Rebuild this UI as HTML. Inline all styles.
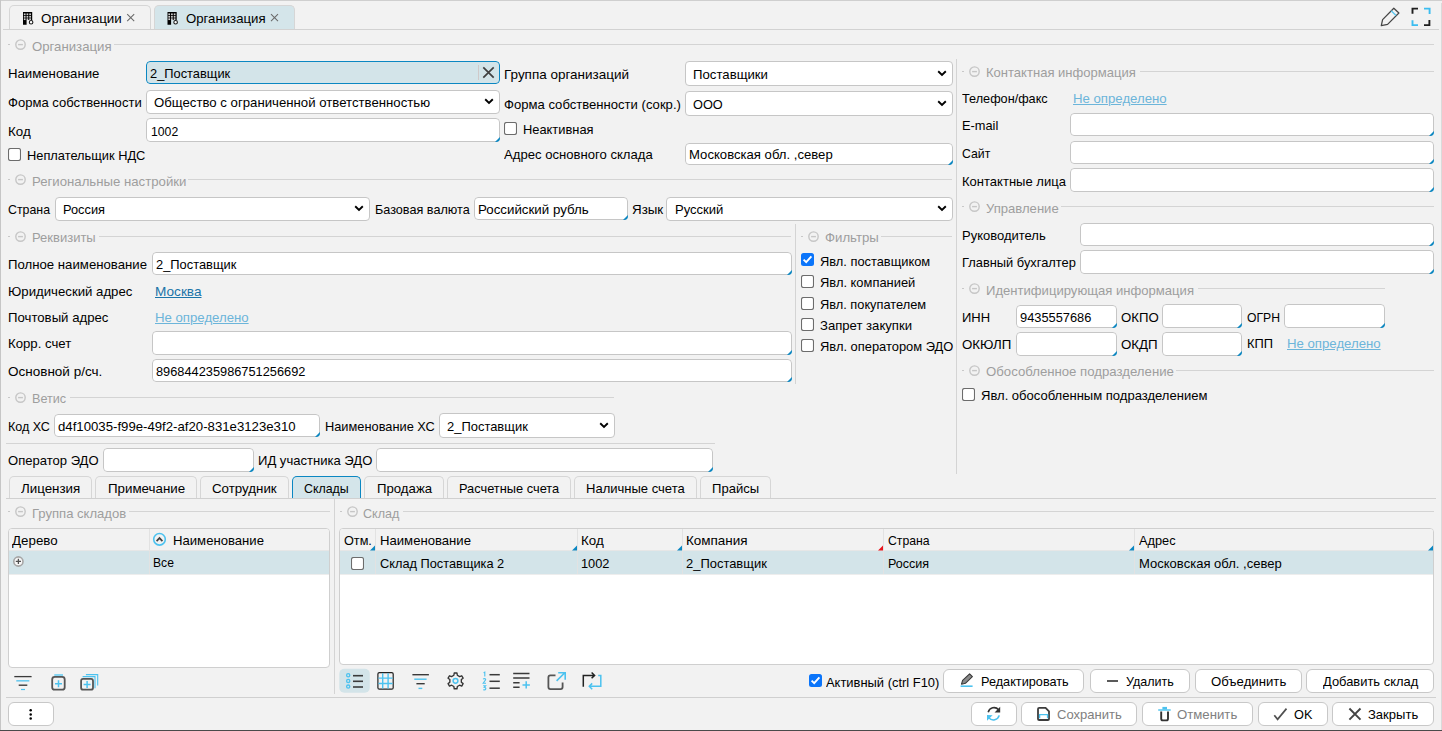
<!DOCTYPE html><html><head><meta charset="utf-8"><style>
html,body{margin:0;padding:0;background:#f2f2f2}
body{width:1442px;height:731px;overflow:hidden;position:relative;background:#f2f2f2;font-family:"Liberation Sans",sans-serif;font-size:13px;color:#000}
.a{position:absolute}
.t{position:absolute;white-space:nowrap;line-height:16px;font-size:13.2px}
.gh{color:#9e9e9e}
svg{display:block}
.inp{position:absolute;box-sizing:border-box;background:#fff;border:1px solid #c6c6c6;border-radius:4px;clip-path:inset(0 round 4px)}
.tri{position:absolute;right:-1px;bottom:-1px;width:0;height:0;border-style:solid;border-width:0 0 5.5px 5.5px;border-color:transparent transparent #0b87c2 transparent}
</style></head><body>
<div class="a" style="left:0px;top:0px;width:1442px;height:1px;background:#cfcfcf"></div>
<div class="a" style="left:0px;top:0px;width:1px;height:730px;background:#c6c6c6"></div>
<div class="a" style="left:1441px;top:3px;width:1px;height:727px;background:#dadada"></div>
<div class="a" style="left:0px;top:730px;width:1442px;height:1px;background:#4a4a4a"></div>
<div class="a" style="left:9px;top:5px;width:142px;height:25px;box-sizing:border-box;background:#f2f2f2;border:1px solid #d6d6d6;border-bottom:none;border-radius:5px 5px 0 0;"></div>
<div class="t " style="left:41px;top:11px;transform:scaleX(1.0117);transform-origin:0 0;">Организации</div>
<div class="a" style="left:154px;top:5px;width:141px;height:25px;box-sizing:border-box;background:#d4e5ea;border:1px solid #d6d6d6;border-bottom:none;border-radius:5px 5px 0 0;"></div>
<div class="t " style="left:186px;top:11px;">Организация</div>
<div class="a" style="left:3px;top:29px;width:1436px;height:1px;background:#d2d2d2"></div>
<div class="a" style="left:8px;top:44px;width:1426px;height:1px;background:#d4d4d4"></div>
<div class="a" style="left:8px;top:44px;width:2px;height:1px;background:#c8c8c8"></div>
<div class="t gh" style="left:10px;top:39px;padding-left:22px;padding-right:2px;background:#f2f2f2"><span style="display:inline-block;">Организация</span></div>
<svg class="a" style="left:14px;top:39px" width="13" height="13" viewBox="0 0 13 13"><circle cx="6.5" cy="5.6" r="4.7" fill="none" stroke="#c6c6c6" stroke-width="1.4"/><line x1="4.1" y1="5.6" x2="8.9" y2="5.6" stroke="#c6c6c6" stroke-width="1.4"/></svg>
<div class="t " style="left:8px;top:66px;">Наименование</div>
<div class="a inp" style="left:146px;top:61px;width:354px;height:23px;background:#d3e4e9;border-color:#0b87c2;"></div>
<div class="t " style="left:150px;top:66px;transform:scaleX(0.9745);transform-origin:0 0;">2_Поставщик</div>
<div class="t " style="left:504px;top:67px;transform:scaleX(1.0220);transform-origin:0 0;">Группа организаций</div>
<div class="a" style="left:685px;top:61px;width:268px;height:25px;box-sizing:border-box;background:#fff;border:1px solid #c6c6c6;border-radius:4px;"></div>
<div class="t " style="left:693px;top:67px;">Поставщики</div>
<div class="a" style="left:937px;top:70px;line-height:0"><svg width="10" height="7" viewBox="0 0 10 7"><path d="M1.2 1.3 L5 5 L8.8 1.3" fill="none" stroke="#000" stroke-width="1.9"/></svg></div>
<div class="t " style="left:8px;top:95px;transform:scaleX(0.9906);transform-origin:0 0;">Форма собственности</div>
<div class="a" style="left:146px;top:90px;width:354px;height:24px;box-sizing:border-box;background:#fff;border:1px solid #c6c6c6;border-radius:4px;"></div>
<div class="t " style="left:154px;top:95px;">Общество с ограниченной ответственностью</div>
<div class="a" style="left:484px;top:98px;line-height:0"><svg width="10" height="7" viewBox="0 0 10 7"><path d="M1.2 1.3 L5 5 L8.8 1.3" fill="none" stroke="#000" stroke-width="1.9"/></svg></div>
<div class="t " style="left:504px;top:97px;transform:scaleX(0.9923);transform-origin:0 0;">Форма собственности (сокр.)</div>
<div class="a" style="left:685px;top:91px;width:268px;height:25px;box-sizing:border-box;background:#fff;border:1px solid #c6c6c6;border-radius:4px;"></div>
<div class="t " style="left:693px;top:97px;transform:scaleX(0.9649);transform-origin:0 0;">ООО</div>
<div class="a" style="left:937px;top:100px;line-height:0"><svg width="10" height="7" viewBox="0 0 10 7"><path d="M1.2 1.3 L5 5 L8.8 1.3" fill="none" stroke="#000" stroke-width="1.9"/></svg></div>
<div class="t " style="left:8px;top:124px;transform:scaleX(1.0124);transform-origin:0 0;">Код</div>
<div class="a inp" style="left:146px;top:118px;width:354px;height:24px;"><i class="tri"></i></div>
<div class="t " style="left:151px;top:124px;transform:scaleX(0.9269);transform-origin:0 0;">1002</div>
<svg class="a" style="left:504px;top:122px" width="13" height="13" viewBox="0 0 13 13"><rect x="0.5" y="0.5" width="12" height="12" rx="2" fill="#fff" stroke="#6c6c6c" stroke-width="1.1"/></svg>
<div class="t " style="left:523px;top:122px;transform:scaleX(0.9754);transform-origin:0 0;">Неактивная</div>
<svg class="a" style="left:8px;top:148px" width="13" height="13" viewBox="0 0 13 13"><rect x="0.5" y="0.5" width="12" height="12" rx="2" fill="#fff" stroke="#6c6c6c" stroke-width="1.1"/></svg>
<div class="t " style="left:27px;top:148px;transform:scaleX(0.9726);transform-origin:0 0;">Неплательщик НДС</div>
<div class="t " style="left:504px;top:147px;transform:scaleX(0.9934);transform-origin:0 0;">Адрес основного склада</div>
<div class="a inp" style="left:685px;top:143px;width:268px;height:22px;"><i class="tri"></i></div>
<div class="t " style="left:689px;top:147px;transform:scaleX(0.9951);transform-origin:0 0;">Московская обл. ,север</div>
<div class="a" style="left:8px;top:179px;width:944px;height:1px;background:#d4d4d4"></div>
<div class="a" style="left:8px;top:179px;width:2px;height:1px;background:#c8c8c8"></div>
<div class="t gh" style="left:10px;top:174px;padding-left:22px;padding-right:2px;background:#f2f2f2"><span style="display:inline-block;">Региональные настройки</span></div>
<svg class="a" style="left:14px;top:174px" width="13" height="13" viewBox="0 0 13 13"><circle cx="6.5" cy="5.6" r="4.7" fill="none" stroke="#c6c6c6" stroke-width="1.4"/><line x1="4.1" y1="5.6" x2="8.9" y2="5.6" stroke="#c6c6c6" stroke-width="1.4"/></svg>
<div class="t " style="left:8px;top:202px;transform:scaleX(0.9363);transform-origin:0 0;">Страна</div>
<div class="a" style="left:55px;top:197px;width:315px;height:24px;box-sizing:border-box;background:#fff;border:1px solid #c6c6c6;border-radius:4px;"></div>
<div class="t " style="left:63px;top:202px;transform:scaleX(0.9711);transform-origin:0 0;">Россия</div>
<div class="a" style="left:354px;top:205px;line-height:0"><svg width="10" height="7" viewBox="0 0 10 7"><path d="M1.2 1.3 L5 5 L8.8 1.3" fill="none" stroke="#000" stroke-width="1.9"/></svg></div>
<div class="t " style="left:375px;top:202px;transform:scaleX(0.9585);transform-origin:0 0;">Базовая валюта</div>
<div class="a inp" style="left:474px;top:197px;width:154px;height:23px;"><i class="tri"></i></div>
<div class="t " style="left:478px;top:202px;transform:scaleX(1.0092);transform-origin:0 0;">Российский рубль</div>
<div class="t " style="left:632px;top:202px;transform:scaleX(1.0121);transform-origin:0 0;">Язык</div>
<div class="a" style="left:666px;top:197px;width:287px;height:24px;box-sizing:border-box;background:#fff;border:1px solid #c6c6c6;border-radius:4px;"></div>
<div class="t " style="left:675px;top:202px;transform:scaleX(0.9890);transform-origin:0 0;">Русский</div>
<div class="a" style="left:937px;top:205px;line-height:0"><svg width="10" height="7" viewBox="0 0 10 7"><path d="M1.2 1.3 L5 5 L8.8 1.3" fill="none" stroke="#000" stroke-width="1.9"/></svg></div>
<div class="a" style="left:8px;top:236px;width:783px;height:1px;background:#d4d4d4"></div>
<div class="a" style="left:8px;top:236px;width:2px;height:1px;background:#c8c8c8"></div>
<div class="t gh" style="left:10px;top:230px;padding-left:22px;padding-right:2px;background:#f2f2f2"><span style="display:inline-block;transform:scaleX(0.9857);transform-origin:0 0;">Реквизиты</span></div>
<svg class="a" style="left:14px;top:231px" width="13" height="13" viewBox="0 0 13 13"><circle cx="6.5" cy="5.6" r="4.7" fill="none" stroke="#c6c6c6" stroke-width="1.4"/><line x1="4.1" y1="5.6" x2="8.9" y2="5.6" stroke="#c6c6c6" stroke-width="1.4"/></svg>
<div class="a" style="left:795px;top:224px;width:1px;height:160px;background:#d4d4d4"></div>
<div class="t " style="left:8px;top:257px;">Полное наименование</div>
<div class="a inp" style="left:152px;top:252px;width:640px;height:23px;"><i class="tri"></i></div>
<div class="t " style="left:156px;top:257px;transform:scaleX(0.9770);transform-origin:0 0;">2_Поставщик</div>
<div class="t " style="left:8px;top:284px;">Юридический адрес</div>
<div class="t " style="left:155px;top:284px;transform:scaleX(1.0326);transform-origin:0 0;color:#1b74a8;text-decoration:underline;text-underline-offset:1px">Москва</div>
<div class="t " style="left:8px;top:310px;">Почтовый адрес</div>
<div class="t " style="left:155px;top:310px;color:#6cb5da;text-decoration:underline;text-underline-offset:1px">Не определено</div>
<div class="t " style="left:8px;top:336px;">Корр. счет</div>
<div class="a inp" style="left:152px;top:331px;width:640px;height:24px;"><i class="tri"></i></div>
<div class="t " style="left:8px;top:364px;transform:scaleX(1.0238);transform-origin:0 0;">Основной р/сч.</div>
<div class="a inp" style="left:152px;top:359px;width:640px;height:23px;"><i class="tri"></i></div>
<div class="t " style="left:156px;top:364px;transform:scaleX(0.9699);transform-origin:0 0;">896844235986751256692</div>
<div class="a" style="left:801px;top:236px;width:151px;height:1px;background:#d4d4d4"></div>
<div class="a" style="left:801px;top:236px;width:2px;height:1px;background:#c8c8c8"></div>
<div class="t gh" style="left:803px;top:230px;padding-left:22px;padding-right:2px;background:#f2f2f2"><span style="display:inline-block;">Фильтры</span></div>
<svg class="a" style="left:807px;top:231px" width="13" height="13" viewBox="0 0 13 13"><circle cx="6.5" cy="5.6" r="4.7" fill="none" stroke="#c6c6c6" stroke-width="1.4"/><line x1="4.1" y1="5.6" x2="8.9" y2="5.6" stroke="#c6c6c6" stroke-width="1.4"/></svg>
<svg class="a" style="left:801px;top:253px" width="13" height="13" viewBox="0 0 13 13"><rect x="0" y="0" width="13" height="13" rx="2.5" fill="#0b75fa"/><path d="M2.6 6.6 L5.2 9.2 L10.4 3.4" fill="none" stroke="#fff" stroke-width="1.9"/></svg>
<div class="t " style="left:820px;top:254px;transform:scaleX(0.9744);transform-origin:0 0;">Явл. поставщиком</div>
<svg class="a" style="left:801px;top:275px" width="13" height="13" viewBox="0 0 13 13"><rect x="0.5" y="0.5" width="12" height="12" rx="2" fill="#fff" stroke="#6c6c6c" stroke-width="1.1"/></svg>
<div class="t " style="left:820px;top:275px;transform:scaleX(0.9784);transform-origin:0 0;">Явл. компанией</div>
<svg class="a" style="left:801px;top:297px" width="13" height="13" viewBox="0 0 13 13"><rect x="0.5" y="0.5" width="12" height="12" rx="2" fill="#fff" stroke="#6c6c6c" stroke-width="1.1"/></svg>
<div class="t " style="left:820px;top:297px;transform:scaleX(0.9706);transform-origin:0 0;">Явл. покупателем</div>
<svg class="a" style="left:801px;top:318px" width="13" height="13" viewBox="0 0 13 13"><rect x="0.5" y="0.5" width="12" height="12" rx="2" fill="#fff" stroke="#6c6c6c" stroke-width="1.1"/></svg>
<div class="t " style="left:820px;top:318px;transform:scaleX(0.9941);transform-origin:0 0;">Запрет закупки</div>
<svg class="a" style="left:801px;top:339px" width="13" height="13" viewBox="0 0 13 13"><rect x="0.5" y="0.5" width="12" height="12" rx="2" fill="#fff" stroke="#6c6c6c" stroke-width="1.1"/></svg>
<div class="t " style="left:820px;top:339px;transform:scaleX(0.9787);transform-origin:0 0;">Явл. оператором ЭДО</div>
<div class="a" style="left:8px;top:397px;width:606px;height:1px;background:#d4d4d4"></div>
<div class="a" style="left:8px;top:397px;width:2px;height:1px;background:#c8c8c8"></div>
<div class="t gh" style="left:10px;top:391px;padding-left:22px;padding-right:2px;background:#f2f2f2"><span style="display:inline-block;transform:scaleX(0.9579);transform-origin:0 0;">Ветис</span></div>
<svg class="a" style="left:14px;top:392px" width="13" height="13" viewBox="0 0 13 13"><circle cx="6.5" cy="5.6" r="4.7" fill="none" stroke="#c6c6c6" stroke-width="1.4"/><line x1="4.1" y1="5.6" x2="8.9" y2="5.6" stroke="#c6c6c6" stroke-width="1.4"/></svg>
<div class="t " style="left:8px;top:419px;transform:scaleX(0.9529);transform-origin:0 0;">Код ХС</div>
<div class="a inp" style="left:54px;top:414px;width:266px;height:23px;"><i class="tri"></i></div>
<div class="t " style="left:58px;top:419px;">d4f10035-f99e-49f2-af20-831e3123e310</div>
<div class="t " style="left:325px;top:419px;transform:scaleX(0.9711);transform-origin:0 0;">Наименование ХС</div>
<div class="a" style="left:439px;top:413px;width:176px;height:25px;box-sizing:border-box;background:#fff;border:1px solid #c6c6c6;border-radius:4px;"></div>
<div class="t " style="left:447px;top:419px;transform:scaleX(0.9818);transform-origin:0 0;">2_Поставщик</div>
<div class="a" style="left:599px;top:422px;line-height:0"><svg width="10" height="7" viewBox="0 0 10 7"><path d="M1.2 1.3 L5 5 L8.8 1.3" fill="none" stroke="#000" stroke-width="1.9"/></svg></div>
<div class="a" style="left:6px;top:443px;width:709px;height:1px;background:#d4d4d4"></div>
<div class="t " style="left:8px;top:453px;transform:scaleX(0.9893);transform-origin:0 0;">Оператор ЭДО</div>
<div class="a inp" style="left:103px;top:448px;width:151px;height:24px;"><i class="tri"></i></div>
<div class="t " style="left:258px;top:453px;transform:scaleX(0.9900);transform-origin:0 0;">ИД участника ЭДО</div>
<div class="a inp" style="left:376px;top:448px;width:337px;height:24px;"><i class="tri"></i></div>
<div class="a" style="left:956px;top:59px;width:1px;height:415px;background:#d4d4d4"></div>
<div class="a" style="left:962px;top:71px;width:472px;height:1px;background:#d4d4d4"></div>
<div class="a" style="left:962px;top:71px;width:2px;height:1px;background:#c8c8c8"></div>
<div class="t gh" style="left:964px;top:65px;padding-left:22px;padding-right:2px;background:#f2f2f2"><span style="display:inline-block;transform:scaleX(0.9885);transform-origin:0 0;">Контактная информация</span></div>
<svg class="a" style="left:968px;top:66px" width="13" height="13" viewBox="0 0 13 13"><circle cx="6.5" cy="5.6" r="4.7" fill="none" stroke="#c6c6c6" stroke-width="1.4"/><line x1="4.1" y1="5.6" x2="8.9" y2="5.6" stroke="#c6c6c6" stroke-width="1.4"/></svg>
<div class="t " style="left:962px;top:91px;transform:scaleX(0.9621);transform-origin:0 0;">Телефон/факс</div>
<div class="t " style="left:1073px;top:91px;color:#6cb5da;text-decoration:underline;text-underline-offset:1px">Не определено</div>
<div class="t " style="left:962px;top:118px;transform:scaleX(0.9712);transform-origin:0 0;">E-mail</div>
<div class="a inp" style="left:1070px;top:113px;width:364px;height:23px;"><i class="tri"></i></div>
<div class="t " style="left:962px;top:146px;transform:scaleX(0.9303);transform-origin:0 0;">Сайт</div>
<div class="a inp" style="left:1070px;top:141px;width:364px;height:23px;"><i class="tri"></i></div>
<div class="t " style="left:962px;top:174px;transform:scaleX(0.9876);transform-origin:0 0;">Контактные лица</div>
<div class="a inp" style="left:1070px;top:168px;width:364px;height:24px;"><i class="tri"></i></div>
<div class="a" style="left:962px;top:206px;width:472px;height:1px;background:#d4d4d4"></div>
<div class="a" style="left:962px;top:206px;width:2px;height:1px;background:#c8c8c8"></div>
<div class="t gh" style="left:964px;top:201px;padding-left:22px;padding-right:2px;background:#f2f2f2"><span style="display:inline-block;transform:scaleX(0.9916);transform-origin:0 0;">Управление</span></div>
<svg class="a" style="left:968px;top:201px" width="13" height="13" viewBox="0 0 13 13"><circle cx="6.5" cy="5.6" r="4.7" fill="none" stroke="#c6c6c6" stroke-width="1.4"/><line x1="4.1" y1="5.6" x2="8.9" y2="5.6" stroke="#c6c6c6" stroke-width="1.4"/></svg>
<div class="t " style="left:962px;top:228px;transform:scaleX(0.9851);transform-origin:0 0;">Руководитель</div>
<div class="a inp" style="left:1080px;top:223px;width:354px;height:23px;"><i class="tri"></i></div>
<div class="t " style="left:962px;top:255px;transform:scaleX(0.9752);transform-origin:0 0;">Главный бухгалтер</div>
<div class="a inp" style="left:1080px;top:250px;width:354px;height:24px;"><i class="tri"></i></div>
<div class="a" style="left:962px;top:288px;width:423px;height:1px;background:#d4d4d4"></div>
<div class="a" style="left:962px;top:288px;width:2px;height:1px;background:#c8c8c8"></div>
<div class="t gh" style="left:964px;top:283px;padding-left:22px;padding-right:2px;background:#f2f2f2"><span style="display:inline-block;transform:scaleX(0.9922);transform-origin:0 0;">Идентифицирующая информация</span></div>
<svg class="a" style="left:968px;top:283px" width="13" height="13" viewBox="0 0 13 13"><circle cx="6.5" cy="5.6" r="4.7" fill="none" stroke="#c6c6c6" stroke-width="1.4"/><line x1="4.1" y1="5.6" x2="8.9" y2="5.6" stroke="#c6c6c6" stroke-width="1.4"/></svg>
<div class="t " style="left:962px;top:310px;transform:scaleX(0.9849);transform-origin:0 0;">ИНН</div>
<div class="a inp" style="left:1016px;top:305px;width:101px;height:23px;"><i class="tri"></i></div>
<div class="t " style="left:1020px;top:310px;transform:scaleX(0.9735);transform-origin:0 0;">9435557686</div>
<div class="t " style="left:1121px;top:310px;">ОКПО</div>
<div class="a inp" style="left:1162px;top:304px;width:80px;height:24px;"><i class="tri"></i></div>
<div class="t " style="left:1247px;top:310px;transform:scaleX(0.9239);transform-origin:0 0;">ОГРН</div>
<div class="a inp" style="left:1284px;top:304px;width:101px;height:24px;"><i class="tri"></i></div>
<div class="t " style="left:962px;top:337px;transform:scaleX(1.0079);transform-origin:0 0;">ОКЮЛП</div>
<div class="a inp" style="left:1016px;top:332px;width:101px;height:24px;"><i class="tri"></i></div>
<div class="t " style="left:1121px;top:337px;transform:scaleX(1.0094);transform-origin:0 0;">ОКДП</div>
<div class="a inp" style="left:1162px;top:332px;width:80px;height:24px;"><i class="tri"></i></div>
<div class="t " style="left:1247px;top:336px;transform:scaleX(0.9760);transform-origin:0 0;">КПП</div>
<div class="t " style="left:1287px;top:336px;color:#6cb5da;text-decoration:underline;text-underline-offset:1px">Не определено</div>
<div class="a" style="left:962px;top:370px;width:472px;height:1px;background:#d4d4d4"></div>
<div class="a" style="left:962px;top:370px;width:2px;height:1px;background:#c8c8c8"></div>
<div class="t gh" style="left:964px;top:364px;padding-left:22px;padding-right:2px;background:#f2f2f2"><span style="display:inline-block;">Обособленное подразделение</span></div>
<svg class="a" style="left:968px;top:365px" width="13" height="13" viewBox="0 0 13 13"><circle cx="6.5" cy="5.6" r="4.7" fill="none" stroke="#c6c6c6" stroke-width="1.4"/><line x1="4.1" y1="5.6" x2="8.9" y2="5.6" stroke="#c6c6c6" stroke-width="1.4"/></svg>
<svg class="a" style="left:962px;top:388px" width="13" height="13" viewBox="0 0 13 13"><rect x="0.5" y="0.5" width="12" height="12" rx="2" fill="#fff" stroke="#6c6c6c" stroke-width="1.1"/></svg>
<div class="t " style="left:981px;top:388px;transform:scaleX(0.9880);transform-origin:0 0;">Явл. обособленным подразделением</div>
<div class="a" style="left:9px;top:476px;width:83px;height:23px;box-sizing:border-box;background:#f2f2f2;border:1px solid #d6d6d6;border-bottom:none;border-radius:5px 5px 0 0;"></div>
<div class="t " style="left:21px;top:481px;transform:scaleX(1.0118);transform-origin:0 0;">Лицензия</div>
<div class="a" style="left:95px;top:476px;width:102px;height:23px;box-sizing:border-box;background:#f2f2f2;border:1px solid #d6d6d6;border-bottom:none;border-radius:5px 5px 0 0;"></div>
<div class="t " style="left:108px;top:481px;transform:scaleX(1.0112);transform-origin:0 0;">Примечание</div>
<div class="a" style="left:200px;top:476px;width:89px;height:23px;box-sizing:border-box;background:#f2f2f2;border:1px solid #d6d6d6;border-bottom:none;border-radius:5px 5px 0 0;"></div>
<div class="t " style="left:212px;top:481px;transform:scaleX(1.0097);transform-origin:0 0;">Сотрудник</div>
<div class="a" style="left:292px;top:476px;width:69px;height:23px;box-sizing:border-box;background:#d4e5ea;border:1px solid #0b87c2;border-bottom:none;border-radius:5px 5px 0 0;"></div>
<div class="t " style="left:304px;top:481px;transform:scaleX(0.9380);transform-origin:0 0;">Склады</div>
<div class="a" style="left:364px;top:476px;width:80px;height:23px;box-sizing:border-box;background:#f2f2f2;border:1px solid #d6d6d6;border-bottom:none;border-radius:5px 5px 0 0;"></div>
<div class="t " style="left:377px;top:481px;">Продажа</div>
<div class="a" style="left:447px;top:476px;width:124px;height:23px;box-sizing:border-box;background:#f2f2f2;border:1px solid #d6d6d6;border-bottom:none;border-radius:5px 5px 0 0;"></div>
<div class="t " style="left:459px;top:481px;transform:scaleX(0.9713);transform-origin:0 0;">Расчетные счета</div>
<div class="a" style="left:574px;top:476px;width:123px;height:23px;box-sizing:border-box;background:#f2f2f2;border:1px solid #d6d6d6;border-bottom:none;border-radius:5px 5px 0 0;"></div>
<div class="t " style="left:586px;top:481px;transform:scaleX(0.9870);transform-origin:0 0;">Наличные счета</div>
<div class="a" style="left:700px;top:476px;width:71px;height:23px;box-sizing:border-box;background:#f2f2f2;border:1px solid #d6d6d6;border-bottom:none;border-radius:5px 5px 0 0;"></div>
<div class="t " style="left:712px;top:481px;transform:scaleX(0.9896);transform-origin:0 0;">Прайсы</div>
<div class="a" style="left:6px;top:498px;width:1430px;height:1px;background:#d0d0d0"></div>
<div class="a" style="left:334px;top:499px;width:1px;height:195px;background:#d4d4d4"></div>
<div class="a" style="left:8px;top:511px;width:322px;height:1px;background:#d4d4d4"></div>
<div class="a" style="left:8px;top:511px;width:2px;height:1px;background:#c8c8c8"></div>
<div class="t gh" style="left:10px;top:506px;padding-left:22px;padding-right:2px;background:#f2f2f2"><span style="display:inline-block;transform:scaleX(0.9911);transform-origin:0 0;">Группа складов</span></div>
<svg class="a" style="left:14px;top:506px" width="13" height="13" viewBox="0 0 13 13"><circle cx="6.5" cy="5.6" r="4.7" fill="none" stroke="#c6c6c6" stroke-width="1.4"/><line x1="4.1" y1="5.6" x2="8.9" y2="5.6" stroke="#c6c6c6" stroke-width="1.4"/></svg>
<div class="a" style="left:340px;top:511px;width:1094px;height:1px;background:#d4d4d4"></div>
<div class="a" style="left:340px;top:511px;width:2px;height:1px;background:#c8c8c8"></div>
<div class="t gh" style="left:342px;top:506px;padding-left:21px;padding-right:2px;background:#f2f2f2"><span style="display:inline-block;transform:scaleX(0.9536);transform-origin:0 0;">Склад</span></div>
<svg class="a" style="left:346px;top:506px" width="13" height="13" viewBox="0 0 13 13"><circle cx="6.5" cy="5.6" r="4.7" fill="none" stroke="#c6c6c6" stroke-width="1.4"/><line x1="4.1" y1="5.6" x2="8.9" y2="5.6" stroke="#c6c6c6" stroke-width="1.4"/></svg>
<div class="a" style="left:8px;top:528px;width:322px;height:140px;box-sizing:border-box;background:#fff;border:1px solid #cfcfcf;border-radius:4px;"></div>
<div class="a" style="left:9px;top:529px;width:320px;height:22px;background:#f2f2f2;border-radius:3px 3px 0 0"></div>
<div class="a" style="left:9px;top:551px;width:320px;height:24px;background:#d3e4e9"></div>
<div class="a" style="left:149px;top:529px;width:1px;height:45px;background:#e2e2e2"></div>
<div class="a" style="left:9px;top:550px;width:320px;height:1px;background:#e6e6e6"></div>
<div class="a" style="left:9px;top:574px;width:320px;height:1px;background:#ededed"></div>
<div class="t " style="left:12px;top:533px;transform:scaleX(1.0124);transform-origin:0 0;">Дерево</div>
<div class="t " style="left:173px;top:533px;transform:scaleX(0.9954);transform-origin:0 0;">Наименование</div>
<div class="t " style="left:153px;top:555px;transform:scaleX(0.9193);transform-origin:0 0;">Все</div>
<div class="a" style="left:339px;top:528px;width:1095px;height:137px;box-sizing:border-box;background:#fff;border:1px solid #cfcfcf;border-radius:4px;"></div>
<div class="a" style="left:340px;top:529px;width:1093px;height:22px;background:#f2f2f2;border-radius:3px 3px 0 0"></div>
<div class="a" style="left:340px;top:551px;width:1093px;height:24px;background:#d3e4e9"></div>
<div class="a" style="left:340px;top:550px;width:1093px;height:1px;background:#e6e6e6"></div>
<div class="a" style="left:340px;top:574px;width:1093px;height:1px;background:#ededed"></div>
<div class="a" style="left:375px;top:529px;width:1px;height:45px;background:#e2e2e2"></div>
<div class="a" style="left:577px;top:529px;width:1px;height:45px;background:#e2e2e2"></div>
<div class="a" style="left:682px;top:529px;width:1px;height:45px;background:#e2e2e2"></div>
<div class="a" style="left:883px;top:529px;width:1px;height:45px;background:#e2e2e2"></div>
<div class="a" style="left:1134px;top:529px;width:1px;height:45px;background:#e2e2e2"></div>
<div class="t " style="left:344px;top:533px;transform:scaleX(0.9610);transform-origin:0 0;">Отм.</div>
<div class="t " style="left:380px;top:533px;transform:scaleX(0.9954);transform-origin:0 0;">Наименование</div>
<div class="t " style="left:581px;top:533px;transform:scaleX(1.0124);transform-origin:0 0;">Код</div>
<div class="t " style="left:686px;top:533px;transform:scaleX(1.0206);transform-origin:0 0;">Компания</div>
<div class="t " style="left:888px;top:533px;transform:scaleX(0.9296);transform-origin:0 0;">Страна</div>
<div class="t " style="left:1139px;top:533px;transform:scaleX(0.9691);transform-origin:0 0;">Адрес</div>
<svg class="a" style="left:351px;top:557px" width="13" height="13" viewBox="0 0 13 13"><rect x="0.5" y="0.5" width="12" height="12" rx="2" fill="#fff" stroke="#6c6c6c" stroke-width="1.1"/></svg>
<div class="t " style="left:380px;top:556px;transform:scaleX(0.9697);transform-origin:0 0;">Склад Поставщика 2</div>
<div class="t " style="left:581px;top:556px;transform:scaleX(0.9712);transform-origin:0 0;">1002</div>
<div class="t " style="left:686px;top:556px;transform:scaleX(0.9818);transform-origin:0 0;">2_Поставщик</div>
<div class="t " style="left:888px;top:556px;transform:scaleX(0.9503);transform-origin:0 0;">Россия</div>
<div class="t " style="left:1139px;top:556px;transform:scaleX(0.9882);transform-origin:0 0;">Московская обл. ,север</div>
<svg class="a" style="left:809px;top:674px" width="13" height="13" viewBox="0 0 13 13"><rect x="0" y="0" width="13" height="13" rx="2.5" fill="#0b75fa"/><path d="M2.6 6.6 L5.2 9.2 L10.4 3.4" fill="none" stroke="#fff" stroke-width="1.9"/></svg>
<div class="t " style="left:826px;top:675px;transform:scaleX(0.9795);transform-origin:0 0;">Активный (ctrl F10)</div>
<div class="a" style="left:943px;top:669px;width:141px;height:24px;box-sizing:border-box;background:#fff;border:1px solid #c8c8c8;border-radius:6px;"></div>
<div class="t " style="left:981px;top:674px;transform:scaleX(0.9626);transform-origin:0 0;color:#000">Редактировать</div>
<div class="a" style="left:1090px;top:669px;width:100px;height:24px;box-sizing:border-box;background:#fff;border:1px solid #c8c8c8;border-radius:6px;"></div>
<div class="t " style="left:1126px;top:674px;transform:scaleX(0.9512);transform-origin:0 0;color:#000">Удалить</div>
<div class="a" style="left:1195px;top:669px;width:107px;height:24px;box-sizing:border-box;background:#fff;border:1px solid #c8c8c8;border-radius:6px;"></div>
<div class="t " style="left:1211px;top:674px;color:#000">Объединить</div>
<div class="a" style="left:1306px;top:669px;width:128px;height:24px;box-sizing:border-box;background:#fff;border:1px solid #c8c8c8;border-radius:6px;"></div>
<div class="t " style="left:1323px;top:674px;transform:scaleX(0.9795);transform-origin:0 0;color:#000">Добавить склад</div>
<div class="a" style="left:6px;top:697px;width:1430px;height:1px;background:#d0d0d0"></div>
<div class="a" style="left:8px;top:702px;width:46px;height:24px;box-sizing:border-box;background:#fff;border:1px solid #c8c8c8;border-radius:6px;"></div>
<div class="a" style="left:971px;top:702px;width:46px;height:24px;box-sizing:border-box;background:#fff;border:1px solid #c8c8c8;border-radius:6px;"></div>
<div class="a" style="left:1021px;top:702px;width:116px;height:24px;box-sizing:border-box;background:#fff;border:1px solid #c8c8c8;border-radius:6px;"></div>
<div class="t " style="left:1057px;top:707px;transform:scaleX(0.9871);transform-origin:0 0;color:#808080">Сохранить</div>
<div class="a" style="left:1142px;top:702px;width:111px;height:24px;box-sizing:border-box;background:#fff;border:1px solid #c8c8c8;border-radius:6px;"></div>
<div class="t " style="left:1177px;top:707px;color:#808080">Отменить</div>
<div class="a" style="left:1258px;top:702px;width:70px;height:24px;box-sizing:border-box;background:#fff;border:1px solid #c8c8c8;border-radius:6px;"></div>
<div class="t " style="left:1294px;top:707px;transform:scaleX(0.9652);transform-origin:0 0;color:#000">OK</div>
<div class="a" style="left:1332px;top:702px;width:102px;height:24px;box-sizing:border-box;background:#fff;border:1px solid #c8c8c8;border-radius:6px;"></div>
<div class="t " style="left:1368px;top:707px;transform:scaleX(0.9882);transform-origin:0 0;color:#000">Закрыть</div>
<svg class="a" style="left:0;top:0" width="1442" height="731" viewBox="0 0 1442 731"><path d="M23,12 H32.2 V20 H26.6 V24.8 H23 Z" fill="#000"/><rect x="23.849999999999998" y="13.450000000000001" width="1.7" height="1.7" fill="#d0d0d0"/><rect x="23.849999999999998" y="15.950000000000001" width="1.7" height="1.7" fill="#d0d0d0"/><rect x="23.849999999999998" y="18.349999999999998" width="1.7" height="1.7" fill="#d0d0d0"/><rect x="26.549999999999997" y="13.450000000000001" width="1.7" height="1.7" fill="#d0d0d0"/><rect x="26.549999999999997" y="15.950000000000001" width="1.7" height="1.7" fill="#d0d0d0"/><rect x="26.549999999999997" y="18.349999999999998" width="1.7" height="1.7" fill="#d0d0d0"/><rect x="29.25" y="13.450000000000001" width="1.7" height="1.7" fill="#d0d0d0"/><rect x="29.25" y="15.950000000000001" width="1.7" height="1.7" fill="#d0d0d0"/><rect x="29.25" y="18.349999999999998" width="1.7" height="1.7" fill="#d0d0d0"/><circle cx="31.1" cy="22.2" r="1.8" fill="#fff" stroke="#111" stroke-width="1.05"/><path d="M167.5,12 H176.7 V20 H171.1 V24.8 H167.5 Z" fill="#000"/><rect x="168.35" y="13.450000000000001" width="1.7" height="1.7" fill="#d0d0d0"/><rect x="168.35" y="15.950000000000001" width="1.7" height="1.7" fill="#d0d0d0"/><rect x="168.35" y="18.349999999999998" width="1.7" height="1.7" fill="#d0d0d0"/><rect x="171.05" y="13.450000000000001" width="1.7" height="1.7" fill="#d0d0d0"/><rect x="171.05" y="15.950000000000001" width="1.7" height="1.7" fill="#d0d0d0"/><rect x="171.05" y="18.349999999999998" width="1.7" height="1.7" fill="#d0d0d0"/><rect x="173.75" y="13.450000000000001" width="1.7" height="1.7" fill="#d0d0d0"/><rect x="173.75" y="15.950000000000001" width="1.7" height="1.7" fill="#d0d0d0"/><rect x="173.75" y="18.349999999999998" width="1.7" height="1.7" fill="#d0d0d0"/><circle cx="175.6" cy="22.2" r="1.8" fill="#fff" stroke="#111" stroke-width="1.05"/><path d="M127.2,14.2 L134.2,21.2 M134.2,14.2 L127.2,21.2" stroke="#6a6a6a" stroke-width="1.05" fill="none"/><path d="M271,14.2 L278,21.2 M278,14.2 L271,21.2" stroke="#6a6a6a" stroke-width="1.05" fill="none"/><path d="M1381.3,25.6 L1382.6,19.6 L1393.8,8.2 L1398.9,13 L1387.6,24.4 Z" fill="none" stroke="#454545" stroke-width="1.25" stroke-linejoin="round"/><path d="M1391.2,10.8 L1396,15.6" stroke="#5bc6ee" stroke-width="1.4"/><path d="M1412.5,13.8 V8.6 H1418" fill="none" stroke="#1e1e1e" stroke-width="1.9"/><path d="M1424,8.6 H1429.6 V13.9" fill="none" stroke="#3cbdf0" stroke-width="1.9"/><path d="M1412.5,20.2 V25.1 H1418" fill="none" stroke="#3cbdf0" stroke-width="1.9"/><path d="M1424,25.1 H1429.4 V20" fill="none" stroke="#1e1e1e" stroke-width="1.9"/><rect x="478" y="65" width="1" height="15" fill="#cfc9c9"/><path d="M483.3,67.4 L493.7,77.6 M493.7,67.4 L483.3,77.6" stroke="#404040" stroke-width="1.7"/><circle cx="159.5" cy="539.3" r="5.8" fill="none" stroke="#4cc2ef" stroke-width="1.6"/><path d="M156.6,541.2 L159.5,538.1 L162.4,541.2" fill="none" stroke="#404040" stroke-width="1.7"/><circle cx="18.4" cy="561.5" r="4.6" fill="#f7f7f7" stroke="#a6a6a6" stroke-width="1.6"/><path d="M15.8,561.4 H21 M18.4,558.8 V564" stroke="#505050" stroke-width="1.3"/><path d="M14.3,676.6 H31.6" stroke="#3a3a3a" stroke-width="1.3"/><path d="M16.3,680.8 H29.3" stroke="#4cc2ef" stroke-width="1.6" opacity="0.8"/><path d="M18.7,685.2 H27.3" stroke="#3a3a3a" stroke-width="1.4"/><path d="M21,689.5 H25" stroke="#4cc2ef" stroke-width="1.2"/><rect x="52.2" y="676.9" width="12.5" height="12.8" rx="2.5" fill="none" stroke="#555" stroke-width="1.8"/><rect x="54.3" y="674" width="8.7" height="2" fill="#86d5f2"/><path d="M55,683.7 H62 M58.5,680.2 V687.2" stroke="#4cc2ef" stroke-width="1.5"/><rect x="81.1" y="678.9" width="11.9" height="10.8" rx="2" fill="none" stroke="#555" stroke-width="1.8"/><path d="M82.6,676.6 H95 V688.3" fill="none" stroke="#4cc2ef" stroke-width="1.1"/><path d="M85.9,674.6 H97.7 V685.6" fill="none" stroke="#4cc2ef" stroke-width="1.1"/><path d="M83.6,684.5 H90.6 M87.1,681 V688" stroke="#4cc2ef" stroke-width="1.5"/><rect x="339.3" y="668.8" width="30.5" height="24" rx="5" fill="#d3e4e9"/><circle cx="348.2" cy="675.3" r="1.6" fill="none" stroke="#4cc2ef" stroke-width="1.3"/><path d="M353,675.6999999999999 H363" stroke="#3a3a3a" stroke-width="1.6"/><circle cx="348.2" cy="680.9" r="1.6" fill="none" stroke="#4cc2ef" stroke-width="1.3"/><path d="M353,681.3 H363" stroke="#3a3a3a" stroke-width="1.6"/><circle cx="348.2" cy="686.6" r="1.6" fill="none" stroke="#4cc2ef" stroke-width="1.3"/><path d="M353,687.0 H363" stroke="#3a3a3a" stroke-width="1.6"/><rect x="377.9" y="672.6" width="15.3" height="16.6" rx="1.5" fill="none" stroke="#222" stroke-width="1.2"/><path d="M382.7,673.2 V688.6 M388.1,673.2 V688.6 M378.5,678.1 H392.6 M378.5,683.5 H392.6" stroke="#4cc2ef" stroke-width="1.4"/><path d="M412.4,674.7 H428.9" stroke="#3a3a3a" stroke-width="1.4"/><path d="M414.3,679.2 H426.6" stroke="#4cc2ef" stroke-width="1.4"/><path d="M416.4,683.7 H424.7" stroke="#3a3a3a" stroke-width="1.4"/><path d="M418.5,688.4 H422.3" stroke="#4cc2ef" stroke-width="1.4"/><path d="M453.88,675.26 L454.21,673.02 L456.99,673.02 L457.32,675.26 L459.62,676.59 L461.73,675.76 L463.12,678.16 L461.35,679.57 L461.35,682.23 L463.12,683.64 L461.73,686.04 L459.62,685.21 L457.32,686.54 L456.99,688.78 L454.21,688.78 L453.88,686.54 L451.58,685.21 L449.47,686.04 L448.08,683.64 L449.85,682.23 L449.85,679.57 L448.08,678.16 L449.47,675.76 L451.58,676.59 Z" fill="none" stroke="#333" stroke-width="1.35" stroke-linejoin="round"/><circle cx="455.5" cy="680.8" r="2.4" fill="none" stroke="#4cc2ef" stroke-width="1.5"/><path d="M489.5,674.7 H499.8" stroke="#3a3a3a" stroke-width="1.5"/><path d="M489.5,681.3 H499.8" stroke="#3a3a3a" stroke-width="1.5"/><path d="M489.5,688.2 H499.8" stroke="#3a3a3a" stroke-width="1.5"/><path d="M483.6,672.8 L484.8,672.2 V676.6 M483.2,679.3 Q483.6,678.6 484.5,678.6 Q485.8,678.6 485.6,679.8 L483.2,683.2 H486 M483.2,685.8 H485.6 L484.2,687.3 Q486,687.4 485.8,688.8 Q485.4,690.3 483.2,689.8" fill="none" stroke="#4cc2ef" stroke-width="1.1"/><path d="M513.2,673.5 H529.5 M513.2,678.1 H529.5 M513.2,682.8 H519.6 M513.2,687.2 H519.6" stroke="#3a3a3a" stroke-width="1.5"/><path d="M522.5,684.9 H529.9 M526.2,681.2 V688.6" stroke="#4cc2ef" stroke-width="1.5"/><path d="M555.5,675.4 H550.4 Q548.4,675.4 548.4,677.4 V687.1 Q548.4,689.1 550.4,689.1 H560.6 Q562.6,689.1 562.6,687.1 V682.5" fill="none" stroke="#555" stroke-width="1.8"/><path d="M556.6,680.9 L564.8,672.8 M558.2,672.8 H565.2 V679.8" fill="none" stroke="#4cc2ef" stroke-width="1.6"/><path d="M583.3,686.8 V675.4 H594.3 M591.6,672.5 L594.6,675.4 L591.6,678.3" fill="none" stroke="#222" stroke-width="1.5"/><path d="M598.2,675.4 H600.8 V686.3 H589.4 M592.2,683.4 L589.3,686.3 L592.2,689.2" fill="none" stroke="#4cc2ef" stroke-width="1.5"/><path d="M961.5,684.2 L962.6,680.4 L969.6,673.8 L972.4,676.6 L965.4,683.3 Z" fill="#8a8a8a" stroke="#3a3a3a" stroke-width="1.1" stroke-linejoin="round"/><path d="M960.6,686.2 H972.6" stroke="#4cc2ef" stroke-width="1.6"/><path d="M1107,681 H1118" stroke="#5a5a5a" stroke-width="2"/><circle cx="30.7" cy="710.3" r="1.25" fill="#000"/><circle cx="30.7" cy="714.5" r="1.25" fill="#000"/><circle cx="30.7" cy="718.6" r="1.25" fill="#000"/><path d="M988.2,712.2 A6,6 0 0 1 998.6,709.8" fill="none" stroke="#333" stroke-width="1.6"/><path d="M1000.2,706.8 L1000.2,712.6 L994.6,712.4 Z" fill="#333"/><path d="M999.2,715.4 A6,6 0 0 1 988.8,717.8" fill="none" stroke="#4cc2ef" stroke-width="1.6"/><path d="M987,720.8 L987,715 L992.6,715.2 Z" fill="#4cc2ef"/><path d="M1039.2,707.9 H1045.6 L1049,711.3 V718.9 Q1049,720 1047.9,720 H1039.2 Q1038,720 1038,718.9 V709 Q1038,707.9 1039.2,707.9 Z" fill="none" stroke="#3c3c3c" stroke-width="1.8" stroke-linejoin="round"/><path d="M1039.6,718.2 V714.6 H1047.6 V718.2" fill="none" stroke="#4cc2ef" stroke-width="1.4"/><path d="M1158.2,710 H1170.7" stroke="#7fd4f3" stroke-width="2"/><rect x="1162.4" y="706.9" width="4.6" height="2.6" fill="#4cc2ef"/><path d="M1161.2,711.6 V718.8 Q1161.2,720.4 1162.8,720.4 H1166.4 Q1168,720.4 1168,718.8 V711.6" fill="none" stroke="#333" stroke-width="1.9"/><path d="M1274.3,715.2 L1277.6,719.4 L1286.5,708.6" fill="none" stroke="#505050" stroke-width="1.7"/><path d="M1349.4,708.5 L1360.5,719.7 M1360.5,708.5 L1349.4,719.7" stroke="#444" stroke-width="1.9"/><path d="M375,545.5 V550.5 H370 Z" fill="#0b87c2"/><path d="M577,545.5 V550.5 H572 Z" fill="#0b87c2"/><path d="M682,545.5 V550.5 H677 Z" fill="#0b87c2"/><path d="M1134,545.5 V550.5 H1129 Z" fill="#0b87c2"/><path d="M1433,545.5 V550.5 H1428 Z" fill="#0b87c2"/><path d="M883,545.5 V550.5 H878 Z" fill="#e8141c"/></svg>
</body></html>
